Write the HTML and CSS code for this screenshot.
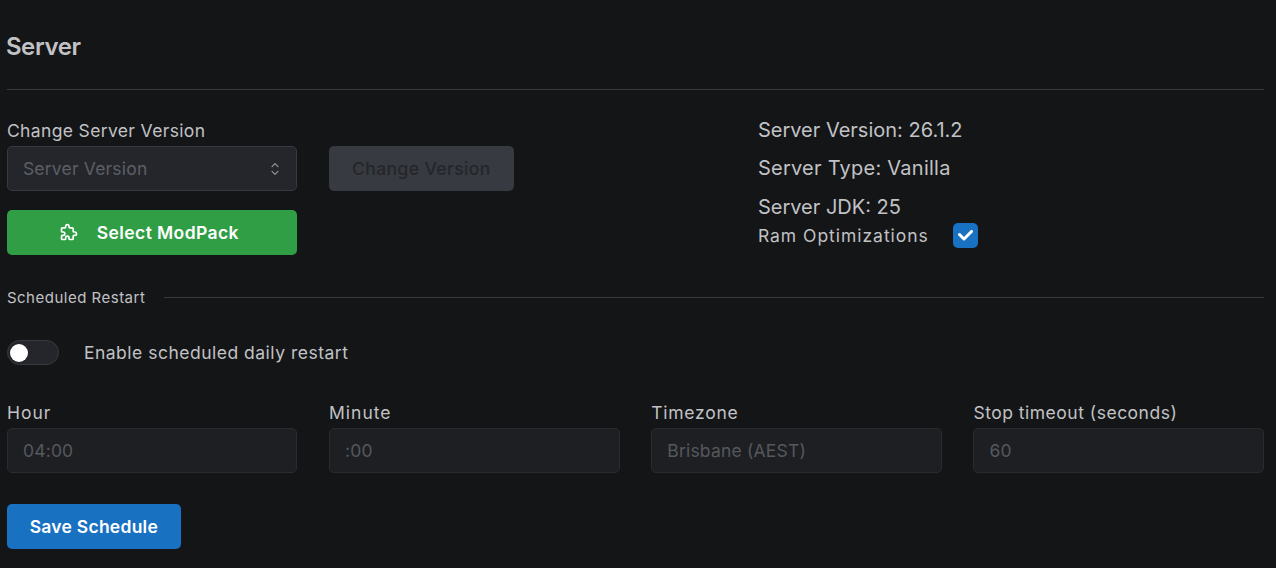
FILE: index.html
```html
<!DOCTYPE html>
<html lang="en">
<head>
    <meta charset="UTF-8">
    <meta name="viewport" content="width=device-width, initial-scale=1.0">
    <title>Server</title>
    <link rel="stylesheet" href="styles.css">
</head>
<body>
    <main class="page">
        <h2 class="title">Server</h2>
        <hr class="divider">

        <!-- version and modpack -->
        <section class="server">
            <div class="server-form">
                <label class="label label-version">Change Server Version</label>
                <div class="version-row">
                    <div class="input select">
                        <span>Server Version</span>
                        <svg class="chevrons" viewBox="0 0 15 15" fill="currentColor">
                            <path d="M4.93179 5.43179C4.75605 5.60753 4.75605 5.89245 4.93179 6.06819C5.10753 6.24392 5.39245 6.24392 5.56819 6.06819L7.49999 4.13638L9.43179 6.06819C9.60753 6.24392 9.89245 6.24392 10.0682 6.06819C10.2439 5.89245 10.2439 5.60753 10.0682 5.43179L7.81819 3.18179C7.73379 3.0974 7.61933 3.04999 7.49999 3.04999C7.38064 3.04999 7.26618 3.0974 7.18179 3.18179L4.93179 5.43179ZM10.0682 9.56819C10.2439 9.39245 10.2439 9.10753 10.0682 8.93179C9.89245 8.75606 9.60753 8.75606 9.43179 8.93179L7.49999 10.8636L5.56819 8.93179C5.39245 8.75606 5.10753 8.75606 4.93179 8.93179C4.75605 9.10753 4.75605 9.39245 4.93179 9.56819L7.18179 11.8182C7.35753 11.9939 7.64245 11.9939 7.81819 11.8182L10.0682 9.56819Z"/>
                        </svg>
                    </div>
                    <button class="btn btn-disabled" disabled>Change Version</button>
                </div>
                <button class="btn btn-green">
                    <svg class="puzzle" viewBox="0 0 24 24" fill="none" stroke="currentColor" stroke-width="2" stroke-linecap="round" stroke-linejoin="round">
                        <path d="M4 7h3a1 1 0 0 0 1 -1v-1a2 2 0 0 1 4 0v1a1 1 0 0 0 1 1h3a1 1 0 0 1 1 1v3a1 1 0 0 0 1 1h1a2 2 0 0 1 0 4h-1a1 1 0 0 0 -1 1v3a1 1 0 0 1 -1 1h-3a1 1 0 0 1 -1 -1v-1a2 2 0 0 0 -4 0v1a1 1 0 0 1 -1 1h-3a1 1 0 0 1 -1 -1v-3a1 1 0 0 1 1 -1h1a2 2 0 0 0 0 -4h-1a1 1 0 0 1 -1 -1v-3a1 1 0 0 1 1 -1"/>
                    </svg>
                    <span>Select ModPack</span>
                </button>
            </div>
            <div class="server-info">
                <p class="info">Server Version: 26.1.2</p>
                <p class="info info-type">Server Type: Vanilla</p>
                <p class="info">Server JDK: 25</p>
                <div class="ram">
                    <span class="ram-label">Ram Optimizations</span>
                    <span class="checkbox">
                        <svg class="check" viewBox="0 0 10 7" fill="currentColor">
                            <path d="M4 4.586L1.707 2.293A1 1 0 1 0 .293 3.707l3 3a.997.997 0 0 0 1.414 0l5-5A1 1 0 1 0 8.293.293L4 4.586z"/>
                        </svg>
                    </span>
                </div>
            </div>
        </section>

        <!-- daily restart -->
        <div class="divider-label">Scheduled Restart</div>
        <div class="switch-row">
            <span class="switch"><span class="thumb"></span></span>
            <span>Enable scheduled daily restart</span>
        </div>
        <section class="schedule">
            <div class="field">
                <label class="label label-short">Hour</label>
                <div class="input disabled">04:00</div>
            </div>
            <div class="field">
                <label class="label label-short">Minute</label>
                <div class="input disabled">:00</div>
            </div>
            <div class="field">
                <label class="label label-zone">Timezone</label>
                <div class="input disabled">Brisbane (AEST)</div>
            </div>
            <div class="field">
                <label class="label">Stop timeout (seconds)</label>
                <div class="input disabled">60</div>
            </div>
        </section>
        <button class="btn btn-blue">Save Schedule</button>
    </main>
</body>
</html>
```
FILE: styles.css
```css
* {
  box-sizing: border-box;
}
body {
  margin: 0;
  background: #141517;
  color: #c1c2c5;
  font-family: Inter, "Open Sans", sans-serif;
  font-size: 17.5px;
  letter-spacing: 0.5px;
  white-space: nowrap;
}
.page {
  padding: 27px 12.1px 0 6.9px;
}
.title {
  margin: 0;
  height: 40px;
  line-height: 40px;
  font-size: 24px;
  font-weight: 600;
  letter-spacing: -0.4px;
  text-indent: -1px;
}
.divider {
  margin: 22px 0 0;
  border: 0;
  border-top: 1px solid #373a40;
}
.server {
  display: grid;
  grid-template-columns: 751px 1fr;
  height: 165px;
}
.server-form {
  padding-top: 29px;
}
.label {
  display: block;
  height: 27px;
  line-height: 24px;
}
.label-version {
  letter-spacing: 0.36px;
}
.label-short {
  letter-spacing: 1px;
}
.label-zone {
  letter-spacing: 0.75px;
}
.version-row {
  display: flex;
  gap: 32px;
  margin-bottom: 19px;
}
.input {
  display: flex;
  align-items: center;
  height: 45px;
  padding: 0 15px;
  border: 1px solid #373a40;
  border-radius: 5px;
  background: #25262b;
  color: #5c5f66;
  letter-spacing: 0.2px;
}
.select {
  width: 290px;
  justify-content: space-between;
  padding-right: 11px;
}
.disabled {
  background: #1e1f23;
  border-color: #292b2f;
  color: #55585d;
}
.chevrons {
  width: 20px;
  height: 20px;
  color: #909296;
}
.btn {
  display: flex;
  align-items: center;
  justify-content: center;
  height: 45px;
  padding: 0;
  border: 0;
  border-radius: 5px;
  color: #fff;
  font-family: inherit;
  font-size: 17.5px;
  font-weight: 600;
  letter-spacing: 0.25px;
}
.btn-disabled {
  width: 185px;
  background: #373a40;
  color: #25262b;
  font-weight: 500;
  letter-spacing: 0.4px;
}
.btn-green {
  width: 290px;
  gap: 18px;
  padding-right: 6px;
  background: #2f9e44;
  letter-spacing: 0.4px;
}
.btn-blue {
  width: 174px;
  margin-top: 31px;
  background: #1971c2;
}
.puzzle {
  width: 20px;
  height: 20px;
  margin-bottom: 1px;
}
.server-info {
  padding-top: 21px;
}
.info {
  margin: 0;
  height: 38.4px;
  line-height: 38px;
  font-size: 20px;
  letter-spacing: 0;
}
.info-type {
  letter-spacing: 0.25px;
}
.ram {
  display: flex;
  align-items: center;
  height: 25px;
  margin-top: -3.2px;
}
.ram-label {
  letter-spacing: 0.97px;
}
.checkbox {
  display: flex;
  align-items: center;
  justify-content: center;
  width: 25px;
  height: 25px;
  margin-left: auto;
  margin-right: 286px;
  border-radius: 5px;
  background: #1971c2;
  color: #fff;
}
.check {
  width: 15px;
}
.divider-label {
  display: flex;
  align-items: center;
  height: 24px;
  margin-top: 30px;
  font-size: 15px;
}
.divider-label::after {
  content: "";
  flex: 1;
  margin-left: 19px;
  border-top: 1px solid #373a40;
}
.switch-row {
  display: flex;
  align-items: center;
  gap: 25px;
  height: 25px;
  margin-top: 31px;
}
.switch {
  display: flex;
  align-items: center;
  width: 52px;
  height: 25px;
  padding-left: 2px;
  border: 1px solid #373a40;
  border-radius: 13px;
  background: #25262b;
}
.thumb {
  width: 18px;
  height: 18px;
  border-radius: 50%;
  background: #fff;
}
.schedule {
  display: grid;
  grid-template-columns: repeat(4, 1fr);
  gap: 31.7px;
  margin-top: 36px;
}
```
